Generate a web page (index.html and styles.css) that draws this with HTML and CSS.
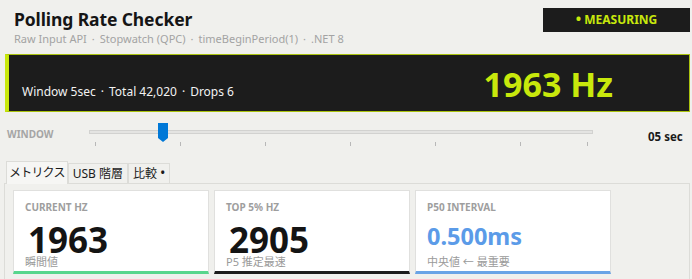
FILE: index.html
```html
<!DOCTYPE html>
<html>
<head>
  <title>Polling Rate Checker</title>
  <link rel="stylesheet" href="styles.css">
</head>
<body>
  <header class="top">
    <div class="titles">
      <h1>Polling Rate Checker</h1>
      <div class="sub">Raw Input API<span class="sep">·</span>Stopwatch (QPC)<span class="sep">·</span>timeBeginPeriod(1)<span class="sep">·</span>.NET 8</div>
    </div>
    <div class="badge"><span class="dot">•</span> MEASURING</div>
  </header>

  <section class="band">
    <div class="band-info">Window 5sec<span class="sep">·</span>Total 42,020<span class="sep">·</span>Drops 6</div>
    <div class="band-hz">1963 Hz</div>
  </section>

  <div class="window-row">
    <span class="win-label">WINDOW</span>
    <div class="slider">
      <div class="track"></div>
      <svg class="thumb" width="10" height="19" viewBox="0 0 10 19">
        <polygon points="0,0 10,0 10,15 5,19 0,15" fill="#0078d7"/>
      </svg>
      <div class="ticks">
        <span class="tick"></span>
        <span class="tick"></span>
        <span class="tick"></span>
        <span class="tick"></span>
        <span class="tick"></span>
        <span class="tick"></span>
        <span class="tick last"></span>
      </div>
    </div>
    <span class="win-value">05 sec</span>
  </div>

  <div class="tabs">
    <div class="tab-strip">
      <div class="tab active">メトリクス</div>
      <div class="tab">USB 階層</div>
      <div class="tab">比較 <span class="dot">•</span></div>
    </div>
    <div class="tab-panel">
      <div class="cards">
        <div class="card green">
          <div class="card-label">CURRENT HZ</div>
          <div class="card-value big">1963</div>
          <div class="card-sub">瞬間値</div>
        </div>
        <div class="card dark">
          <div class="card-label">TOP 5% HZ</div>
          <div class="card-value big">2905</div>
          <div class="card-sub">P5 推定最速</div>
        </div>
        <div class="card blue">
          <div class="card-label">P50 INTERVAL</div>
          <div class="card-value ms">0.500ms</div>
          <div class="card-sub">中央値 ← 最重要</div>
        </div>
      </div>
    </div>
  </div>
</body>
</html>
```

FILE: styles.css
```css
body {
  margin: 0;
  height: 279px;
  background-color: #f0f0ed;
  font-family: "Noto Sans", "Noto Sans CJK JP", sans-serif;
  color: #1a1a1a;
  overflow: hidden;
}

.sep {
  padding: 0 5px;
}

.dot {
  font-family: "Noto Sans", sans-serif;
  font-size: 1.2em;
  line-height: 1;
}

.top {
  display: flex;
  justify-content: space-between;
  align-items: flex-start;
  padding: 7px 2px 0 14px;
}

h1 {
  margin: 0;
  font-size: 17.5px;
  font-weight: 700;
  line-height: 24px;
  letter-spacing: -0.1px;
  color: #151515;
}

.sub {
  font-size: 11px;
  color: #a3a3a3;
  line-height: 16px;
}

.badge {
  margin-top: 1px;
  width: 147px;
  height: 24px;
  background-color: #1c1c1c;
  color: #c8e80c;
  font-size: 12px;
  font-weight: 700;
  line-height: 24px;
  text-align: center;
}

.band {
  display: flex;
  justify-content: space-between;
  align-items: center;
  height: 56px;
  margin: 7px 2px 0 5px;
  background-color: #1c1c1c;
  border: 1px solid #a9c20e;
  border-left: 4px solid #c8e80c;
}

.band-info {
  padding: 16px 0 0 13px;
  font-size: 12px;
  color: #f2f2f2;
}

.band-hz {
  margin-right: 76px;
  font-size: 34px;
  font-weight: 700;
  color: #c8e80c;
  padding-top: 2px;
}

.window-row {
  display: flex;
  align-items: flex-start;
  height: 49px;
  padding-top: 11px;
  box-sizing: border-box;
}

.win-label {
  width: 82px;
  padding: 4px 0 0 7px;
  font-size: 10px;
  font-weight: 700;
  color: #a5a5a5;
}

.slider {
  position: relative;
  width: 504px;
  height: 28px;
}

.track {
  height: 2px;
  margin-top: 7px;
  background-color: #e4e4e2;
  border: 1px solid #d2d2d0;
}

.thumb {
  position: absolute;
  left: 69px;
  top: 0;
}

.ticks {
  display: flex;
  gap: 84px;
  padding: 8px 0 0 6px;
}

.tick {
  width: 1px;
  height: 4px;
  background-color: #b8b8b8;
}

.tick.last {
  margin-left: -18px;
}

.win-value {
  margin-left: 55px;
  padding-top: 6px;
  font-size: 11.5px;
  font-weight: 700;
  color: #1a1a1a;
}

.tabs {
  padding: 0 2px 0 4px;
}

.tab-strip {
  display: flex;
  align-items: flex-end;
  padding-left: 2px;
}

.tab {
  height: 19px;
  padding: 0 4px;
  font-size: 12px;
  line-height: 19px;
  border: 1px solid #dcdcd8;
  border-bottom: none;
  background-color: #f0f0ed;
  color: #1a1a1a;
}

.tab.active {
  position: relative;
  height: 22px;
  margin-bottom: -1px;
  padding: 0 2px;
  line-height: 22px;
  background-color: #f6f6f4;
  font-size: 12px;
  letter-spacing: -0.8px;
}

.tab-panel {
  height: 94px;
  border: 1px solid #dcdcd8;
  background-color: #f0f0ed;
  padding: 6px 8px 0 8px;
}

.cards {
  display: flex;
  gap: 5px;
}

.card {
  width: 172px;
  height: 80px;
  padding: 0 11px;
  background-color: #fff;
  border: 1px solid #e0e0de;
  border-bottom: 3px solid #58d68d;
}

.card.dark {
  border-bottom-color: #1c1c1c;
}

.card.blue {
  border-bottom-color: #6aa4e6;
}

.card-label {
  margin-top: 10px;
  font-size: 10px;
  font-weight: 700;
  color: #9e9e9e;
  line-height: 12px;
}

.card-value {
  font-weight: 700;
}

.card-value.big {
  margin-top: 5px;
  height: 36px;
  font-size: 35px;
  line-height: 44px;
  padding-left: 3px;
  color: #141414;
}

.card-value.ms {
  margin-top: 5px;
  height: 36px;
  font-size: 23.5px;
  line-height: 36px;
  color: #5b9be8;
}

.card-sub {
  margin-top: 1px;
  font-size: 11px;
  line-height: 14px;
  color: #9a9a9a;
}
```
